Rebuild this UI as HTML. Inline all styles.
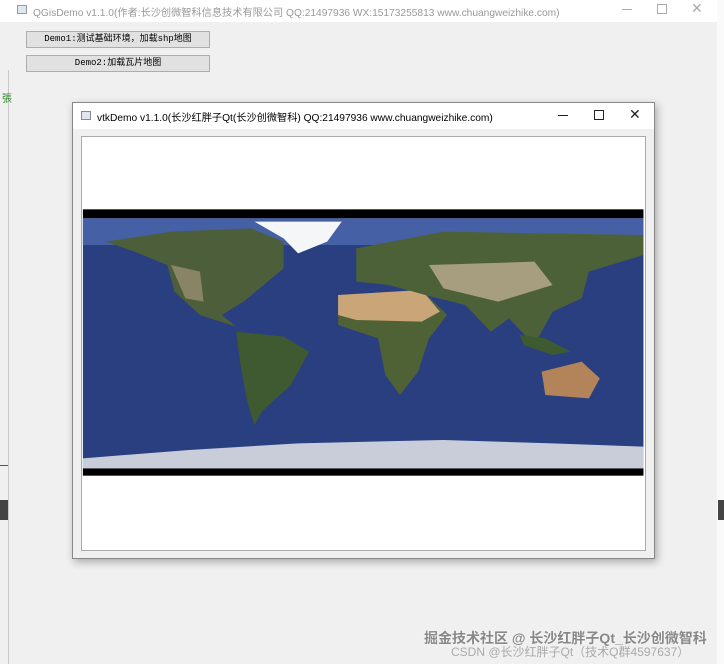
<!DOCTYPE html>
<html><head><meta charset="utf-8"><style>
*{margin:0;padding:0;box-sizing:border-box}
body{width:724px;height:664px;background:#f0f0f0;position:relative;overflow:hidden;font-family:"Liberation Sans","Noto Sans CJK SC",sans-serif}
.abs{position:absolute}
.btn{position:absolute;left:26px;width:184px;height:17px;background:#e1e1e1;border:1px solid #adadad;font:9px "Liberation Mono","Noto Sans CJK SC",monospace;text-align:center;line-height:15px;color:#000}
</style></head><body>
<div class="abs" style="left:0;top:0;width:717px;height:22px;background:#fff"></div>
<div class="abs" style="left:17px;top:5px;width:10px;height:9px;border:1px solid #999;background:#dfe6ee"></div>
<div class="abs" style="left:33px;top:4px;font-size:10.2px;color:#999;white-space:nowrap">QGisDemo v1.1.0(作者:长沙创微智科信息技术有限公司 QQ:21497936 WX:15173255813 www.chuangweizhike.com)</div>
<div class="abs" style="left:622px;top:9px;width:10px;height:1px;background:#aaa"></div>
<div class="abs" style="left:657px;top:4px;width:10px;height:10px;border:1px solid #aaa"></div>
<div class="abs" style="left:691px;top:0px;font-size:14px;color:#aaa">✕</div>
<div class="abs" style="left:717px;top:0;width:7px;height:664px;background:#fafafa"></div>
<div class="abs" style="left:8px;top:70px;width:1px;height:594px;background:#c8c8c8"></div>
<div class="abs" style="left:0;top:465px;width:8px;height:1px;background:#555"></div>
<div class="abs" style="left:0;top:500px;width:8px;height:20px;background:#444"></div>
<div class="abs" style="left:718px;top:500px;width:6px;height:20px;background:#444"></div>
<div class="abs" style="left:2px;top:90px;font-size:10px;color:#2a8a2a">張</div>
<div class="btn" style="top:31px">Demo1:测试基础环境，加载shp地图</div>
<div class="btn" style="top:55px">Demo2:加载瓦片地图</div>

<div class="abs" style="left:72px;top:102px;width:583px;height:457px;background:#f0f0f0;border:1px solid #888;box-shadow:2px 3px 8px rgba(0,0,0,.3)">
 <div class="abs" style="left:0;top:0;width:581px;height:26px;background:#fff"></div>
 <div class="abs" style="left:8px;top:8px;width:10px;height:9px;border:1px solid #888;background:#dfe6ee"></div>
 <div class="abs" style="left:24px;top:6px;font-size:10.2px;color:#000;white-space:nowrap">vtkDemo v1.1.0(长沙红胖子Qt(长沙创微智科) QQ:21497936 www.chuangweizhike.com)</div>
 <div class="abs" style="left:485px;top:12px;width:10px;height:1px;background:#222"></div>
 <div class="abs" style="left:521px;top:7px;width:10px;height:10px;border:1px solid #222"></div>
 <div class="abs" style="left:556px;top:3px;font-size:14px;color:#222">✕</div>
 <div class="abs" style="left:8px;top:33px;width:565px;height:415px;background:#fff;border:1px solid #aaa"></div>
</div>
<svg class="abs" style="left:80px;top:205px" width="570" height="275" viewBox="0 0 1568 825" preserveAspectRatio="none">
<rect x="8" y="13" width="1542" height="27" fill="#000"/>
<rect x="8" y="40" width="1542" height="750" fill="#2a3f80"/>
<rect x="8" y="40" width="1542" height="80" fill="#4660a6"/>
<rect x="8" y="790" width="1542" height="22" fill="#000"/>
<polygon points="8,760 300,735 600,715 1000,705 1300,715 1550,725 1550,790 8,790" fill="#c9ccd9"/>
<polygon points="70,110 250,80 470,70 560,110 560,190 450,290 390,330 430,365 330,330 260,260 240,180 150,140" fill="#4d5f3a"/>
<polygon points="250,180 330,200 340,290 290,280" fill="#8a8466"/>
<polygon points="480,50 720,50 680,110 600,145 560,100" fill="#f4f6f8"/>
<polygon points="430,380 560,395 630,440 580,540 500,620 480,660 460,590 440,470" fill="#3f5a30"/>
<polygon points="710,270 940,255 1010,330 960,400 930,500 880,570 840,510 820,400 710,360" fill="#4e6236"/>
<polygon points="710,270 940,255 990,320 940,350 760,345 710,330" fill="#c9a577"/>
<polygon points="760,130 1000,80 1550,90 1550,150 1400,200 1380,280 1300,320 1250,420 1180,340 1130,380 1060,300 950,270 850,240 760,230" fill="#4d6139"/>
<polygon points="960,180 1250,170 1300,240 1150,290 1000,250" fill="#a79e80"/>
<polygon points="1270,500 1380,470 1430,520 1400,580 1280,570" fill="#b3845a"/>
<polygon points="1210,390 1280,400 1350,440 1300,450 1220,420" fill="#3e5a30"/>
</svg>
<div class="abs" style="left:424px;top:628px;font-size:14px;color:#888;font-weight:bold;white-space:nowrap;text-shadow:0 0 2px #fff">掘金技术社区 @ 长沙红胖子Qt_长沙创微智科</div>
<div class="abs" style="left:451px;top:643px;font-size:12px;color:#aaa;white-space:nowrap">CSDN @长沙红胖子Qt（技术Q群4597637）</div>
</body></html>
